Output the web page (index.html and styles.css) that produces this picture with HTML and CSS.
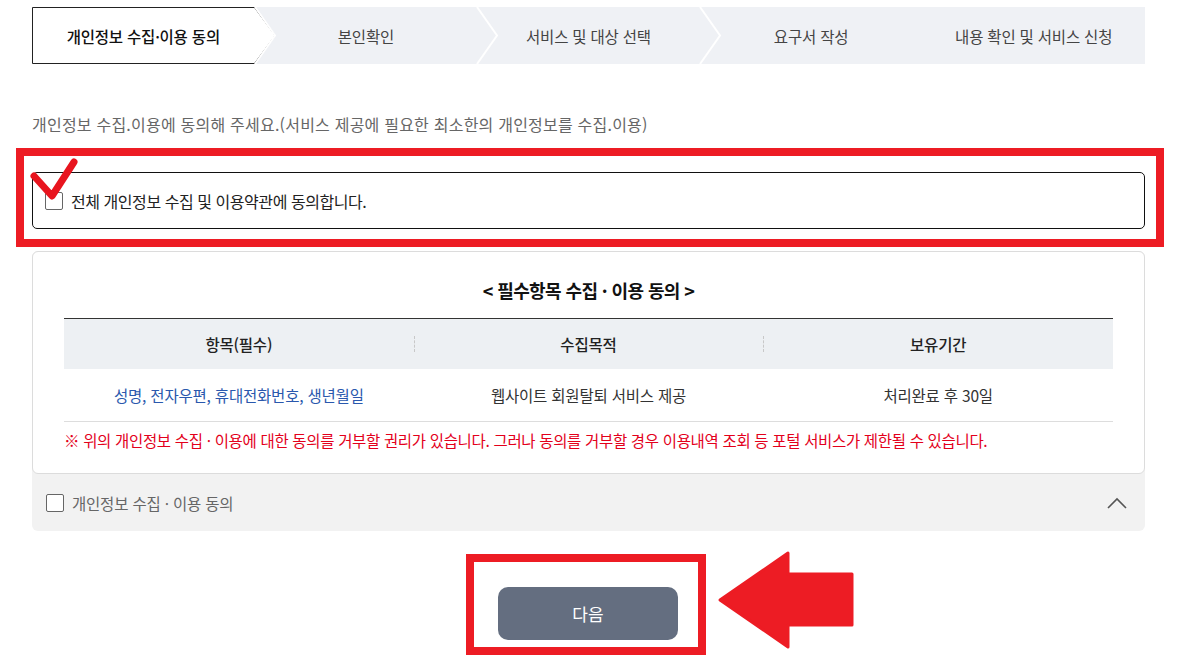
FILE: index.html
```html
<!DOCTYPE html>
<html lang="ko">
<head>
<meta charset="utf-8">
<title>개인정보 수집·이용 동의</title>
<link rel="stylesheet" href="styles.css">
</head>
<body>
<div class="wrap">
  <ol class="steps">
    <li class="step active">
      <svg class="step-shape" width="244" height="57" viewBox="0 0 244 57"><polygon points="0.5,0.5 222.5,0.5 243,28.5 222.5,56.5 0.5,56.5" fill="#fff" stroke="#222" stroke-width="1"/></svg>
      <span class="step-label">개인정보 수집·이용 동의</span>
    </li>
    <li class="step">
      <svg class="sep" width="24" height="57" viewBox="0 0 24 57"><polyline points="1,0 21,28.5 1,57" fill="none" stroke="#fff" stroke-width="2"/></svg>
      <span class="step-label">본인확인</span>
    </li>
    <li class="step">
      <svg class="sep" width="24" height="57" viewBox="0 0 24 57"><polyline points="1,0 21,28.5 1,57" fill="none" stroke="#fff" stroke-width="2"/></svg>
      <span class="step-label">서비스 및 대상 선택</span>
    </li>
    <li class="step">
      <svg class="sep" width="24" height="57" viewBox="0 0 24 57"><polyline points="1,0 21,28.5 1,57" fill="none" stroke="#fff" stroke-width="2"/></svg>
      <span class="step-label">요구서 작성</span>
    </li>
    <li class="step">
      <span class="step-label">내용 확인 및 서비스 신청</span>
    </li>
  </ol>

  <p class="intro">개인정보 수집.이용에 동의해 주세요.(서비스 제공에 필요한 최소한의 개인정보를 수집.이용)</p>

  <div class="hl-box hl-agree">
    <label class="agree-all">
      <span class="cbox"></span>
      <span>전체 개인정보 수집 및 이용약관에 동의합니다.</span>
    </label>
    <svg class="red-check" width="52" height="46" viewBox="0 0 52 46"><polyline points="6,18 24,38 46,4" fill="none" stroke="#e8141e" stroke-width="7" stroke-linecap="round" stroke-linejoin="round"/></svg>
  </div>

  <section class="terms">
    <div class="card">
      <h2 class="card-title">&lt; 필수항목 수집 · 이용 동의 &gt;</h2>
      <table class="tbl">
        <thead>
          <tr><th>항목(필수)</th><th>수집목적</th><th>보유기간</th></tr>
        </thead>
        <tbody>
          <tr><td class="blue">성명, 전자우편, 휴대전화번호, 생년월일</td><td>웹사이트 회원탈퇴 서비스 제공</td><td>처리완료 후 30일</td></tr>
        </tbody>
      </table>
      <p class="note">※ 위의 개인정보 수집 · 이용에 대한 동의를 거부할 권리가 있습니다. 그러나 동의를 거부할 경우 이용내역 조회 등 포털 서비스가 제한될 수 있습니다.</p>
    </div>
    <div class="terms-foot">
      <label class="agree-one">
        <span class="cbox"></span>
        <span>개인정보 수집 · 이용 동의</span>
      </label>
      <svg class="chev" width="22" height="14" viewBox="0 0 22 14"><polyline points="2,12 11,3 20,12" fill="none" stroke="#555" stroke-width="1.6"/></svg>
    </div>
  </section>

  <div class="next-area">
    <div class="hl-box hl-next">
      <button class="btn-next" type="button">다음</button>
      <svg class="red-arrow" width="136" height="98" viewBox="0 0 136 98"><polygon points="2,49 70,2 70,23 134,23 134,74 70,74 70,96" fill="#ed1c24" stroke="#ed1c24" stroke-width="3" stroke-linejoin="round"/></svg>
    </div>
  </div>
</div>
</body>
</html>
```
FILE: styles.css
```css
* { box-sizing: border-box; }
html, body { margin: 0; padding: 0; background: #fff; }
body {
  font-family: "Noto Sans CJK KR", "Noto Sans", sans-serif;
  color: #222;
  letter-spacing: -0.2px;
}
.wrap {
  width: 1113px;
  margin-left: 32px;
  padding-top: 7px;
}

/* steps */
.steps {
  list-style: none;
  margin: 0;
  padding: 0;
  display: flex;
  height: 57px;
  background: #eff1f5;
}
.step {
  flex: 1 1 0;
  position: relative;
  display: flex;
  align-items: center;
  justify-content: center;
  font-size: 15.5px;
  color: #444;
}
.step-label { position: relative; z-index: 2; }
.step.active { color: #111; font-weight: 500; }
.step-shape {
  position: absolute;
  left: 0;
  top: 0;
  z-index: 1;
}
.sep {
  position: absolute;
  left: -1px;
  top: 0;
  z-index: 1;
}

.intro {
  margin: 48px 0 0;
  font-size: 16px;
  line-height: 24px;
  color: #666;
  letter-spacing: 0.22px;
}

/* highlight annotation boxes */
.hl-box {
  border: 8px solid #ed1c24;
  position: relative;
}
.hl-agree {
  margin: 12px 0 0 -16px;
  width: 1148px;
  padding: 16px 11px 10px 8px;
}
.agree-all {
  display: flex;
  align-items: center;
  gap: 8px;
  height: 57px;
  border: 1px solid #111;
  border-radius: 5px;
  padding-left: 12px;
  font-size: 16px;
  color: #222;
  letter-spacing: -0.45px;
}
.cbox {
  width: 18px;
  height: 18px;
  border: 1px solid #666;
  border-radius: 2px;
  background: #fff;
  flex: none;
}
.red-check {
  position: absolute;
  left: 4px;
  top: 2px;
}

/* terms card */
.terms {
  margin-top: 4px;
  background: #f2f2f2;
  border-radius: 6px;
}
.card {
  background: #fff;
  border: 1px solid #dcdcdc;
  border-radius: 6px;
  padding: 25px 31px 22px;
}
.card-title {
  margin: 0;
  text-align: center;
  font-size: 18px;
  font-weight: 700;
  line-height: 26px;
  color: #111;
  letter-spacing: -0.6px;
}
.tbl {
  margin-top: 15px;
  width: 100%;
  border-collapse: collapse;
  table-layout: fixed;
  border-top: 1px solid #333;
  font-size: 15.5px;
}
.tbl th {
  height: 50px;
  background: #edf0f3;
  font-weight: 500;
  color: #222;
  position: relative;
}
.tbl th + th::before {
  content: "";
  position: absolute;
  left: 0;
  top: 17px;
  height: 16px;
  border-left: 1px dashed #c8c8c8;
}
.tbl td {
  height: 53px;
  text-align: center;
  color: #333;
  border-bottom: 1px solid #ddd;
}
.tbl td.blue { color: #2a58ad; }
.note {
  margin: 7px 0 0;
  font-size: 15.5px;
  line-height: 22px;
  color: #e3001b;
  letter-spacing: -0.33px;
}
.terms-foot {
  height: 57px;
  display: flex;
  align-items: center;
  justify-content: space-between;
  padding: 0 17px 0 14px;
}
.agree-one {
  display: flex;
  align-items: center;
  gap: 8px;
  font-size: 15.5px;
  color: #666;
}

/* next */
.next-area {
  display: flex;
  justify-content: center;
  margin-top: 23px;
  padding-right: 5px;
}
.hl-next {
  padding: 25px 20px 7px 24px;
}
.btn-next {
  display: block;
  width: 180px;
  height: 53px;
  border: 0;
  border-radius: 10px;
  background: #646e80;
  color: #fff;
  font-family: inherit;
  font-size: 17px;
  letter-spacing: 0;
}
.red-arrow {
  position: absolute;
  left: calc(100% + 20px);
  top: -11px;
}
```
